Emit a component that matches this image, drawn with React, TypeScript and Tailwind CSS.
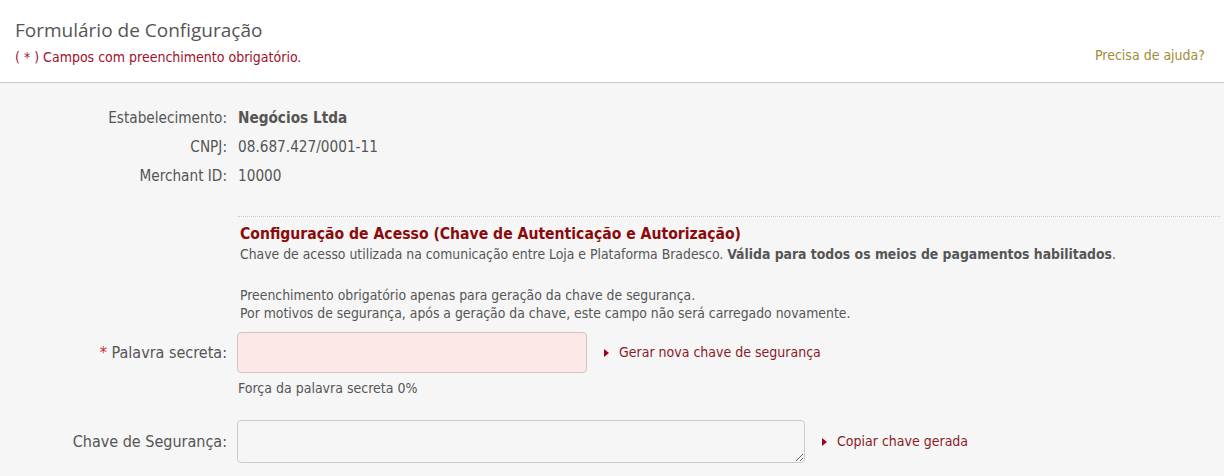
import React from "react";

const Tri = () => (
  <svg width="5" height="8" viewBox="0 0 5 8" className="mr-[10px] shrink-0">
    <path d="M0 0 L5 4 L0 8 Z" fill="#a0001e" />
  </svg>
);

export default function App() {
  return (
    <div className="w-[1224px] h-[476px] overflow-hidden bg-[#f6f6f6] text-[14px] text-[#555] font-['Tahoma','DejaVu_Sans_Condensed','DejaVu_Sans',sans-serif]">
      <div className="h-[83px] bg-white border-b border-[#c8c8c8] flex justify-between px-[15px]">
        <div className="pt-[17px]">
          <div className="text-[19px] leading-[26px] text-[#555] font-['Segoe_UI','Open_Sans',sans-serif]">Formulário de Configuração</div>
          <div className="text-[14px] leading-[16px] mt-[6px] text-[#a0102a]">( * ) Campos com preenchimento obrigatório.</div>
        </div>
        <div className="pt-[45px] pr-[4px] text-[14px] text-[#a38a3a]">Precisa de ajuda?</div>
      </div>

      <div className="pt-[26px]">
        <div className="flex flex-col gap-[10px] text-[15.2px]">
          {[
            ["Estabelecimento:", "Negócios Ltda", true],
            ["CNPJ:", "08.687.427/0001-11", false],
            ["Merchant ID:", "10000", false],
          ].map(([l, v, b]) => (
            <div key={l as string} className="flex items-center h-[19px]">
              <div className="w-[227px] text-right pr-0">{l}</div>
              <div className={"pl-[11px] " + (b ? "font-bold" : "")}>{v}</div>
            </div>
          ))}
        </div>

        <div className="ml-[238px] mr-[4px] mt-[30px] border-t border-dotted border-[#ccc]" />
        <div className="ml-[240px] pt-[8px] text-[13.85px]">
          <div className="text-[15.6px] font-bold text-[#8b0a0a] leading-[18px]">Configuração de Acesso (Chave de Autenticação e Autorização)</div>
          <div className="leading-[18px] mt-[2px]">
            Chave de acesso utilizada na comunicação entre Loja e Plataforma Bradesco. <b>Válida para todos os meios de pagamentos habilitados</b>.
          </div>
          <div className="leading-[18px] mt-[23px]">Preenchimento obrigatório apenas para geração da chave de segurança.</div>
          <div className="leading-[18px]">Por motivos de segurança, após a geração da chave, este campo não será carregado novamente.</div>
        </div>

        <div className="flex items-center mt-[10px]">
          <div className="w-[227px] text-right text-[16px]">
            <span className="text-[#c0303a]">*</span> Palavra secreta:
          </div>
          <div className="ml-[10px] w-[350px] h-[41px] rounded-[4px] border border-[#d0c4c4] bg-[#fde8e8]" />
          <div className="ml-[17px] flex items-center text-[#8b1a2a]">
            <Tri />
            Gerar nova chave de segurança
          </div>
        </div>
        <div className="ml-[238px] mt-[6px] leading-[18px]">Força da palavra secreta 0%</div>

        <div className="flex items-center mt-[23px]">
          <div className="w-[227px] text-right text-[16px]">Chave de Segurança:</div>
          <textarea className="ml-[10px] w-[568px] h-[43px] rounded-[4px] border border-[#ccc] bg-[#f6f6f6] resize-y" />
          <div className="ml-[17px] flex items-center text-[#8b1a2a]">
            <Tri />
            Copiar chave gerada
          </div>
        </div>
      </div>
    </div>
  );
}
